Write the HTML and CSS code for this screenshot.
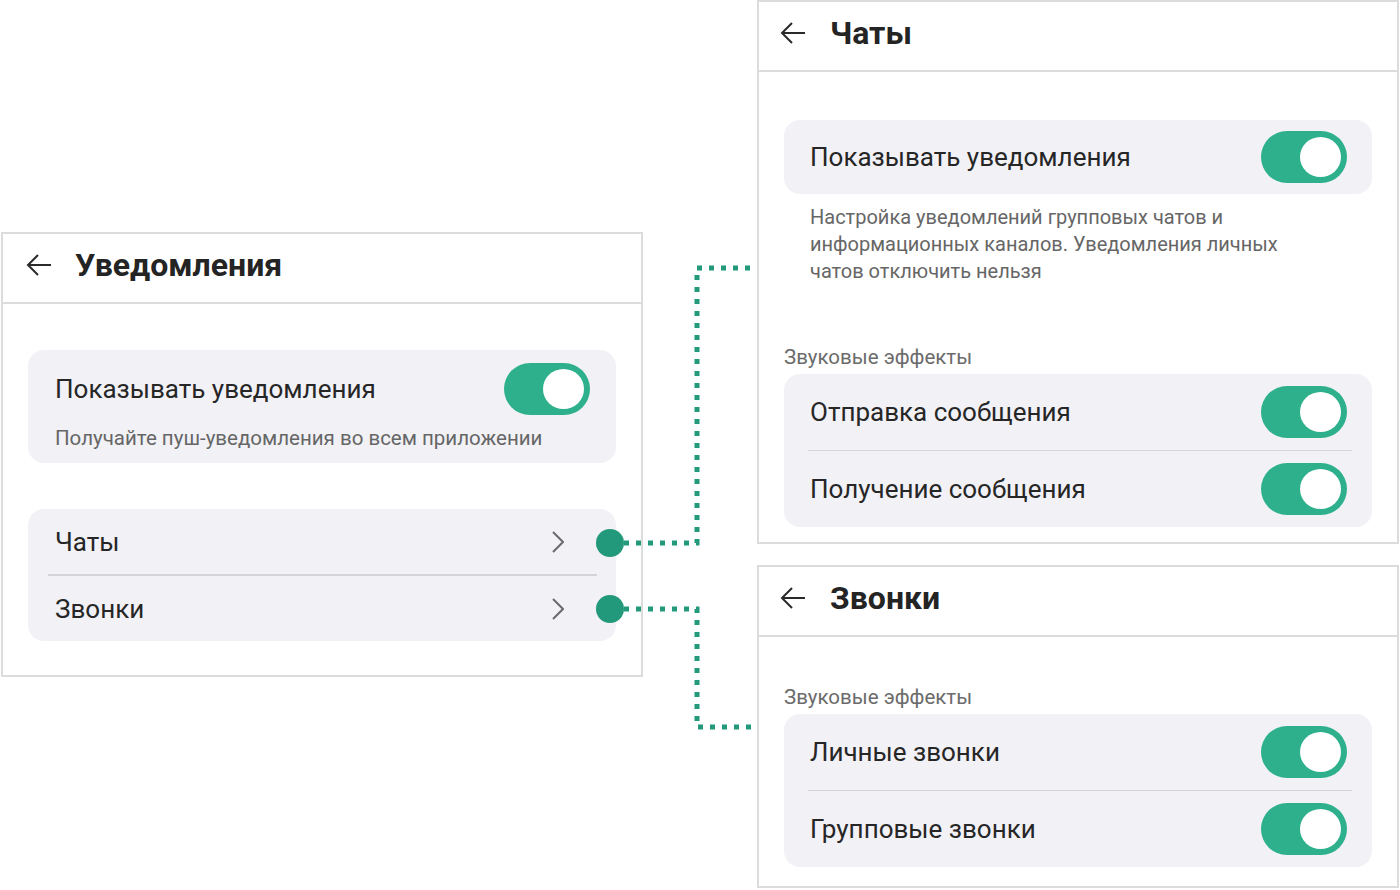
FILE: index.html
```html
<!DOCTYPE html>
<html lang="ru">
<head>
<meta charset="utf-8">
<title>Уведомления</title>
<link rel="stylesheet" href="styles.css">
</head>
<body>
<div class="canvas">
  <section class="panel panel-main">
    <header class="panel-head">
      <svg class="back" viewBox="0 0 26 22" width="26" height="22"><path d="M25 11H2M12 1L2 11l10 10" fill="none" stroke="#2a2a2a" stroke-width="2"/></svg>
      <h1 class="title">Уведомления</h1>
    </header>
    <div class="panel-body body-main">
      <div class="card card-master">
        <div class="row-master">
          <span class="label">Показывать уведомления</span>
          <span class="toggle"><span class="knob"></span></span>
        </div>
        <p class="hint">Получайте пуш-уведомления во всем приложении</p>
      </div>
      <div class="card card-list">
        <div class="row row-nav">
          <span class="label">Чаты</span>
          <svg class="chev" viewBox="0 0 12 22" width="12" height="22"><path d="M1 1l10 10L1 21" fill="none" stroke="#6b6b6b" stroke-width="2"/></svg>
        </div>
        <div class="divider"></div>
        <div class="row row-nav">
          <span class="label">Звонки</span>
          <svg class="chev" viewBox="0 0 12 22" width="12" height="22"><path d="M1 1l10 10L1 21" fill="none" stroke="#6b6b6b" stroke-width="2"/></svg>
        </div>
      </div>
    </div>
  </section>

  <div class="right-col">
    <section class="panel panel-chats">
      <header class="panel-head head-right">
        <svg class="back" viewBox="0 0 26 22" width="26" height="22"><path d="M25 11H2M12 1L2 11l10 10" fill="none" stroke="#2a2a2a" stroke-width="2"/></svg>
        <h1 class="title">Чаты</h1>
      </header>
      <div class="panel-body body-chats">
        <div class="card card-single">
          <span class="label">Показывать уведомления</span>
          <span class="toggle"><span class="knob"></span></span>
        </div>
        <p class="desc">Настройка уведомлений групповых чатов и<br>информационных каналов. Уведомления личных<br>чатов отключить нельзя</p>
        <p class="section-label section-gap">Звуковые эффекты</p>
        <div class="card card-list">
          <div class="row row-toggle">
            <span class="label">Отправка сообщения</span>
            <span class="toggle"><span class="knob"></span></span>
          </div>
          <div class="divider divider-r"></div>
          <div class="row row-toggle">
            <span class="label">Получение сообщения</span>
            <span class="toggle"><span class="knob"></span></span>
          </div>
        </div>
      </div>
    </section>

    <section class="panel panel-calls">
      <header class="panel-head head-right">
        <svg class="back" viewBox="0 0 26 22" width="26" height="22"><path d="M25 11H2M12 1L2 11l10 10" fill="none" stroke="#2a2a2a" stroke-width="2"/></svg>
        <h1 class="title">Звонки</h1>
      </header>
      <div class="panel-body body-calls">
        <p class="section-label">Звуковые эффекты</p>
        <div class="card card-list">
          <div class="row row-toggle">
            <span class="label">Личные звонки</span>
            <span class="toggle"><span class="knob"></span></span>
          </div>
          <div class="divider divider-r"></div>
          <div class="row row-toggle">
            <span class="label">Групповые звонки</span>
            <span class="toggle"><span class="knob"></span></span>
          </div>
        </div>
      </div>
    </section>
  </div>

  <svg class="connectors" viewBox="0 0 1400 890" width="1400" height="890">
    <path d="M624 543H697V268H752" fill="none" stroke="#22997a" stroke-width="5" stroke-dasharray="5 7"/>
    <path d="M624 609H697V727H752" fill="none" stroke="#22997a" stroke-width="5" stroke-dasharray="5 7"/>
    <circle cx="610" cy="543" r="14" fill="#22997a"/>
    <circle cx="610" cy="609" r="14" fill="#22997a"/>
  </svg>
</div>
</body>
</html>
```

FILE: styles.css
```css
* { box-sizing: border-box; }

html, body {
  margin: 0;
  padding: 0;
  background: #ffffff;
}

body {
  font-family: Roboto, "Noto Sans", "Liberation Sans", sans-serif;
  color: #222222;
}

.canvas {
  position: relative;
  width: 1400px;
  height: 890px;
  display: flex;
  align-items: flex-start;
  gap: 114px;
  padding-left: 1px;
  overflow: hidden;
}

.panel {
  width: 642px;
  border: 2px solid #dcdcdc;
  background: #ffffff;
  display: flex;
  flex-direction: column;
}

.panel-main {
  margin-top: 232px;
  height: 445px;
}

.right-col {
  display: flex;
  flex-direction: column;
  gap: 21px;
}

.panel-chats { height: 544px; }
.panel-calls { height: 323px; }

.panel-head {
  height: 70px;
  border-bottom: 2px solid #dcdcdc;
  display: flex;
  align-items: center;
  padding-left: 23px;
  padding-bottom: 6px;
  gap: 23px;
  flex-shrink: 0;
}

.head-right {
  padding-left: 21px;
  gap: 24px;
}

.back { display: block; flex-shrink: 0; }

.title {
  margin: 0;
  font-size: 32px;
  font-weight: 700;
  color: #242424;
}

.panel-body {
  padding: 0 25px;
  display: flex;
  flex-direction: column;
}

.body-main { padding-top: 46px; }
.body-chats { padding-top: 48px; }
.body-calls { padding-top: 48px; }

.card {
  background: #f1f1f6;
  border-radius: 16px;
}

.label {
  font-size: 26px;
  color: #262626;
}

.toggle {
  position: relative;
  display: block;
  width: 86px;
  height: 52px;
  border-radius: 26px;
  background: #2db08b;
  flex-shrink: 0;
}

.knob {
  position: absolute;
  right: 6px;
  top: 6px;
  width: 41px;
  height: 40px;
  border-radius: 50%;
  background: #ffffff;
}

/* main panel master card */
.card-master {
  padding: 13px 26px 13px 27px;
}

.row-master {
  height: 52px;
  display: flex;
  align-items: center;
  justify-content: space-between;
}

.hint {
  margin: 11px 0 0;
  font-size: 20.5px;
  line-height: 24px;
  color: #666666;
}

.card-list {
  display: flex;
  flex-direction: column;
}

.body-main .card-list { margin-top: 46px; }

.row {
  display: flex;
  align-items: center;
  justify-content: space-between;
}

.row-nav {
  height: 65px;
  padding: 0 52px 0 27px;
}

.chev { display: block; }

.divider {
  height: 2px;
  background: #d4d4d8;
  margin: 0 19px 0 20px;
}

.divider-r {
  margin: 0 20px 0 24px;
  height: 1px;
  background: #d6d6da;
}

.row-toggle {
  height: 76px;
  padding: 0 25px 0 26px;
}

/* chats panel */
.card-single {
  height: 74px;
  padding: 0 25px 0 26px;
  display: flex;
  align-items: center;
  justify-content: space-between;
}

.desc {
  margin: 10px 0 0 26px;
  font-size: 20px;
  line-height: 27px;
  color: #666666;
}

.section-label {
  margin: 0 0 5px;
  font-size: 20.5px;
  line-height: 24px;
  color: #6b6b6b;
}

.section-gap { margin-top: 60px; }

.connectors {
  position: absolute;
  left: 0;
  top: 0;
  pointer-events: none;
}
```
